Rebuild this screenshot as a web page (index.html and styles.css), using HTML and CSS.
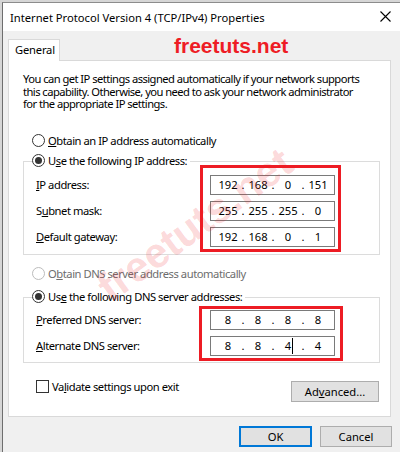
FILE: index.html
```html
<!DOCTYPE html>
<html>
<head>
<meta charset="utf-8">
<link rel="stylesheet" href="styles.css">
</head>
<body>
<div class="window">
  <div class="titlebar">
    <span class="title">Internet Protocol Version 4 (TCP/IPv4) Properties</span>
    <svg class="close" width="11" height="11" viewBox="0 0 11 11"><path d="M0.5 0.5 L10.5 10.5 M10.5 0.5 L0.5 10.5" stroke="#000" stroke-width="1.1" fill="none"/></svg>
  </div>
  <div class="client">
    <div class="tabs"><div class="tab">General</div></div>
    <div class="panel">
      <div class="intro">
        <div class="intro-line">You can get IP settings assigned automatically if your network supports</div>
        <div class="intro-line">this capability. Otherwise, you need to ask your network administrator</div>
        <div class="intro-line">for the appropriate IP settings.</div>
      </div>

      <div class="radio-row first"><span class="radio"></span><span><u>O</u>btain an IP address automatically</span></div>

      <div class="group group-ip">
        <div class="group-head"><span class="radio checked"></span><span>U<u>s</u>e the following IP address:</span></div>
        <div class="group-body">
          <div class="labels labels-ip">
            <div class="label"><u>I</u>P address:</div>
            <div class="label">S<u>u</u>bnet mask:</div>
            <div class="label"><u>D</u>efault gateway:</div>
          </div>
          <div class="hl hl-ip">
            <div class="field"><span class="cell">192</span><span class="dot">.</span><span class="cell">168</span><span class="dot">.</span><span class="cell">0</span><span class="dot">.</span><span class="cell">151</span></div>
            <div class="field"><span class="cell">255</span><span class="dot">.</span><span class="cell">255</span><span class="dot">.</span><span class="cell">255</span><span class="dot">.</span><span class="cell">0</span></div>
            <div class="field"><span class="cell">192</span><span class="dot">.</span><span class="cell">168</span><span class="dot">.</span><span class="cell">0</span><span class="dot">.</span><span class="cell">1</span></div>
          </div>
        </div>
      </div>

      <div class="radio-row disabled"><span class="radio"></span><span>O<u>b</u>tain DNS server address automatically</span></div>

      <div class="group group-dns">
        <div class="group-head"><span class="radio checked"></span><span>Us<u>e</u> the following DNS server addresses:</span></div>
        <div class="group-body">
          <div class="labels labels-dns">
            <div class="label"><u>P</u>referred DNS server:</div>
            <div class="label"><u>A</u>lternate DNS server:</div>
          </div>
          <div class="hl hl-dns">
            <div class="field"><span class="cell">8</span><span class="dot">.</span><span class="cell">8</span><span class="dot">.</span><span class="cell">8</span><span class="dot">.</span><span class="cell">8</span></div>
            <div class="field"><span class="cell">8</span><span class="dot">.</span><span class="cell">8</span><span class="dot">.</span><span class="cell">4<span class="caret"></span></span><span class="dot">.</span><span class="cell">4</span></div>
          </div>
        </div>
      </div>

      <div class="bottom-row">
        <div class="check-row"><span class="checkbox"></span><span>Va<u>l</u>idate settings upon exit</span></div>
        <div class="btn adv">Ad<u>v</u>anced...</div>
      </div>
    </div>
    <div class="footer">
      <div class="btn ok">OK</div>
      <div class="btn cancel">Cancel</div>
    </div>
  </div>
  <div class="wm-top">freetuts.net</div>
  <div class="wm-diag">freetuts.net</div>
</div>
</body>
</html>
```
FILE: styles.css
```css
* { box-sizing: border-box; }
html, body { margin: 0; padding: 0; }
body {
  width: 400px;
  height: 452px;
  overflow: hidden;
  background: #d6d6d6;
  font-family: "Noto Sans", "Open Sans", sans-serif;
  font-size: 11.2px;
  letter-spacing: -0.45px;
  color: #000;
}
.window {
  position: relative;
  margin: 2px 0 0 2px;
  border-left: 1px solid #6e6e6e;
  border-top: 1px solid #8c8c8c;
  background: #f0f0f0;
  height: 450px;
}
.titlebar {
  height: 28px;
  background: #fff;
  display: flex;
  align-items: center;
  justify-content: space-between;
  padding: 0 9px 0 7px;
}
.title { margin-top: 1px; white-space: nowrap; letter-spacing: 0; }
.close { display: block; margin-top: -2px; }
.client { padding: 8px 0 0 5px; }
.tabs { display: flex; }
.tab {
  width: 52px;
  height: 22px;
  background: #fff;
  border: 1px solid #d9d9d9;
  border-bottom: none;
  margin-bottom: -1px;
  position: relative;
  z-index: 1;
  padding-left: 6px;
  line-height: 20px;
  letter-spacing: -0.2px;
}
.panel {
  width: 383px;
  height: 357px;
  background: #fff;
  border: 1px solid #d9d9d9;
  padding: 12px 10px 0 14px;
}
.intro {
  display: flex;
  flex-direction: column;
  white-space: nowrap;
  letter-spacing: -0.55px;
}
.intro-line { height: 12.5px; line-height: 12.5px; }
.radio-row {
  display: flex;
  align-items: center;
  gap: 3px;
  height: 16px;
  margin-left: 9px;
  white-space: nowrap;
}
.radio-row.first { margin-top: 22px; }
.radio-row.disabled { margin-top: 11px; color: #6d6d6d; }
.radio {
  width: 13px;
  height: 13px;
  border: 1px solid #333;
  border-radius: 50%;
  background: #fff;
  display: flex;
  align-items: center;
  justify-content: center;
  flex: none;
}
.radio.checked::after {
  content: "";
  width: 7px;
  height: 7px;
  border-radius: 50%;
  background: #333;
}
.radio-row.disabled .radio { border-color: #bcbcbc; }
.group {
  border: 1px solid #dcdcdc;
  width: 357px;
}
.group-ip { margin-top: 12px; padding-bottom: 2px; }
.group-dns { margin-top: 15px; padding-bottom: 1px; }
.group-head {
  display: flex;
  align-items: center;
  gap: 3px;
  width: fit-content;
  height: 16px;
  margin: -9px 0 0 8px;
  padding-right: 3px;
  background: #fff;
  white-space: nowrap;
}
.group-body { display: flex; align-items: flex-start; }
.labels {
  width: 176px;
  padding-left: 12px;
  display: flex;
  flex-direction: column;
  gap: 6px;
  white-space: nowrap;
}
.labels-ip { padding-top: 6px; }
.labels-dns { padding-top: 5px; width: 175px; }
.label { height: 20px; line-height: 20px; }
.hl {
  border: 3px solid #ed1c24;
  display: flex;
  flex-direction: column;
  gap: 6px;
}
.hl-ip { margin-top: -4px; padding: 7px 3px 2px 7px; }
.hl-dns { margin-top: 1px; padding: 1px 5px 2px 8px; }
.field {
  width: 125px;
  height: 20px;
  border: 1px solid #7a7a7a;
  background: #fff;
  display: flex;
  align-items: center;
  padding-left: 5px;
  letter-spacing: 0;
}
.cell {
  width: 24px;
  line-height: 18px;
  display: flex;
  justify-content: center;
  align-items: center;
}
.dot { width: 6px; text-align: center; line-height: 18px; }
.caret {
  display: inline-block;
  width: 1px;
  height: 16px;
  background: #000;
  margin-left: 1px;
  margin-right: -2px;
}
.bottom-row {
  display: flex;
  justify-content: space-between;
  align-items: flex-start;
  width: 357px;
  margin-top: 16px;
}
.check-row {
  display: flex;
  align-items: center;
  gap: 3px;
  height: 16px;
  margin-left: 13px;
  white-space: nowrap;
}
.checkbox {
  width: 13px;
  height: 13px;
  border: 1px solid #333;
  background: #fff;
  flex: none;
}
.btn {
  height: 21px;
  background: #e1e1e1;
  border: 1px solid #adadad;
  display: flex;
  align-items: center;
  justify-content: center;
  letter-spacing: 0;
}
.adv { width: 88px; margin-top: 2px; margin-right: 1px; }
.footer {
  width: 384px;
  margin-top: 9px;
  display: flex;
  justify-content: flex-end;
  gap: 8px;
}
.ok { width: 73px; border: 2px solid #0078d7; }
.cancel { width: 72px; }
.wm-top {
  position: absolute;
  left: 171px;
  top: 32px;
  font-family: "Liberation Sans", Arial, sans-serif;
  font-weight: bold;
  font-size: 21px;
  line-height: 21px;
  letter-spacing: 0;
  color: #ee1c25;
}
.wm-diag {
  position: absolute;
  left: 192px;
  top: 222px;
  transform: translate(-50%, -50%) rotate(-36deg);
  font-family: "Liberation Sans", Arial, sans-serif;
  font-weight: bold;
  font-size: 42px;
  line-height: 42px;
  letter-spacing: 0;
  white-space: nowrap;
  color: rgba(237, 28, 36, 0.18);
  pointer-events: none;
}
```
